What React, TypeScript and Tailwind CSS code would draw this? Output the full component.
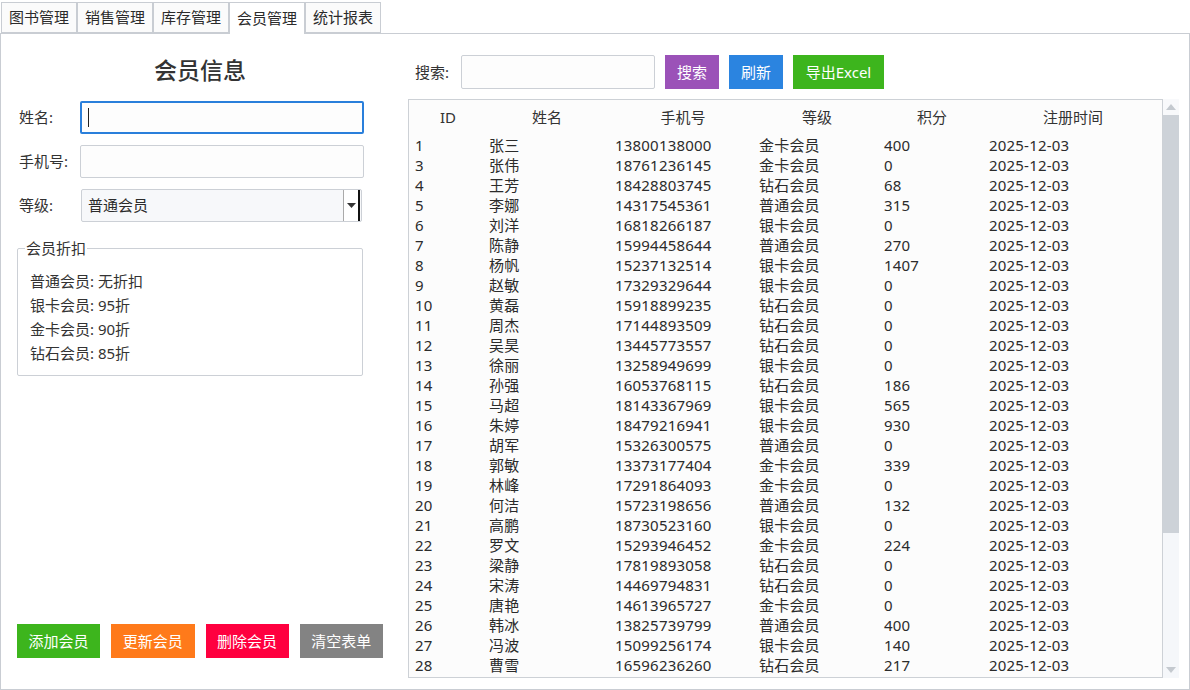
import React from 'react';

const FONT = { fontFamily: '"Noto Sans", "Noto Sans CJK SC", sans-serif' };

const tabs = ['图书管理', '销售管理', '库存管理', '会员管理', '统计报表'];

const members: [string, string, string, string, string][] = [
  ['1', '张三', '13800138000', '金卡会员', '400'],
  ['3', '张伟', '18761236145', '金卡会员', '0'],
  ['4', '王芳', '18428803745', '钻石会员', '68'],
  ['5', '李娜', '14317545361', '普通会员', '315'],
  ['6', '刘洋', '16818266187', '银卡会员', '0'],
  ['7', '陈静', '15994458644', '普通会员', '270'],
  ['8', '杨帆', '15237132514', '银卡会员', '1407'],
  ['9', '赵敏', '17329329644', '银卡会员', '0'],
  ['10', '黄磊', '15918899235', '钻石会员', '0'],
  ['11', '周杰', '17144893509', '钻石会员', '0'],
  ['12', '吴昊', '13445773557', '钻石会员', '0'],
  ['13', '徐丽', '13258949699', '银卡会员', '0'],
  ['14', '孙强', '16053768115', '钻石会员', '186'],
  ['15', '马超', '18143367969', '银卡会员', '565'],
  ['16', '朱婷', '18479216941', '银卡会员', '930'],
  ['17', '胡军', '15326300575', '普通会员', '0'],
  ['18', '郭敏', '13373177404', '金卡会员', '339'],
  ['19', '林峰', '17291864093', '金卡会员', '0'],
  ['20', '何洁', '15723198656', '普通会员', '132'],
  ['21', '高鹏', '18730523160', '银卡会员', '0'],
  ['22', '罗文', '15293946452', '金卡会员', '224'],
  ['23', '梁静', '17819893058', '钻石会员', '0'],
  ['24', '宋涛', '14469794831', '钻石会员', '0'],
  ['25', '唐艳', '14613965727', '金卡会员', '0'],
  ['26', '韩冰', '13825739799', '普通会员', '400'],
  ['27', '冯波', '15099256174', '银卡会员', '140'],
  ['28', '曹雪', '16596236260', '钻石会员', '217'],
];

const discounts = ['普通会员: 无折扣', '银卡会员: 95折', '金卡会员: 90折', '钻石会员: 85折'];

function Tabs() {
  return (
    <div className="flex pt-[2px] pl-px h-[34px] relative z-10">
      {tabs.map((t) => {
        const active = t === '会员管理';
        return (
          <div
            key={t}
            className={
              active
                ? 'w-[76px] h-[32px] bg-white border border-b-0 border-[#c9cdd3] flex items-center justify-center'
                : 'w-[76px] h-[31px] bg-[#fbfbfb] border border-[#c9cdd3] flex items-center justify-center'
            }
          >
            <span className="text-[15px] leading-none text-[#2b2b2b]">{t}</span>
          </div>
        );
      })}
    </div>
  );
}

function LeftPanel() {
  return (
    <div className="w-[382px] pl-[16px] flex flex-col h-full">
      <div className="mt-[21px] h-[30px] flex items-center justify-center text-[23px] font-medium text-[#333]">
        会员信息
      </div>

      <div className="mt-[16px] flex items-center h-[33px]">
        <span className="w-[63px] pl-[2px] text-[15px] text-[#333]">姓名:</span>
        <div className="w-[284px] h-[33px] border-2 border-[#2a7fdb] rounded-[2px] bg-[#fdfdfd] flex items-center pl-[6px]">
          <div className="w-px h-[19px] bg-[#222]" />
        </div>
      </div>

      <div className="mt-[11px] flex items-center h-[33px]">
        <span className="w-[63px] pl-[2px] text-[15px] text-[#333]">手机号:</span>
        <div className="w-[284px] h-[33px] border border-[#ccd0d6] rounded-[2px] bg-[#fdfdfd]" />
      </div>

      <div className="mt-[11px] flex items-center h-[33px]">
        <span className="w-[64px] pl-[2px] text-[15px] text-[#333]">等级:</span>
        <div className="w-[281px] h-[33px] border border-[#ccd0d6] rounded-[2px] bg-[#f7f8fa] flex items-center">
          <span className="flex-1 pl-[6px] text-[15px] text-[#2b2b2b]">普通会员</span>
          <div className="w-[17px] h-[31px] bg-white border-l border-[#aaa] border-r-2 border-r-[#111] flex items-center justify-center mr-[1px]">
            <svg width="9" height="6" viewBox="0 0 9 6">
              <path d="M0 0 L9 0 L4.5 5 Z" fill="#333" />
            </svg>
          </div>
        </div>
      </div>

      <div className="mt-[26px] w-[346px] h-[128px] border border-[#ccd0d6] rounded-[2px] relative">
        <span className="absolute -top-[11px] left-[7px] bg-white px-px text-[15px] leading-[20px] text-[#333]">
          会员折扣
        </span>
        <div className="pt-[20px] pl-[12px] flex flex-col">
          {discounts.map((d) => (
            <span key={d} className="h-[24px] leading-[24px] text-[15px] text-[#333]">
              {d}
            </span>
          ))}
        </div>
      </div>

      <div className="mt-auto mb-[31px] flex gap-[11px]">
        <button className="w-[84px] h-[34px] bg-[#3db51d] text-white text-[15px]">添加会员</button>
        <button className="w-[84px] h-[34px] bg-[#ff7a1a] text-white text-[15px]">更新会员</button>
        <button className="w-[84px] h-[34px] bg-[#ff003f] text-white text-[15px]">删除会员</button>
        <button className="w-[84px] h-[34px] bg-[#838383] text-white text-[15px]">清空表单</button>
      </div>
    </div>
  );
}

const cols = [
  { head: 'ID', w: 'w-[78px]', pad: 'pl-[6px]' },
  { head: '姓名', w: 'w-[120px]', pad: 'pl-[2px]' },
  { head: '手机号', w: 'w-[152px]', pad: 'pl-[8px]' },
  { head: '等级', w: 'w-[116px]', pad: 'pl-0' },
  { head: '积分', w: 'w-[114px]', pad: 'pl-[9px]' },
  { head: '注册时间', w: 'w-[168px]', pad: 'pl-0' },
];

function RightPanel() {
  return (
    <div className="flex-1 pl-[25px] flex flex-col">
      <div className="mt-[21px] h-[34px] flex items-center">
        <span className="w-[53px] pl-[7px] text-[15px] text-[#333]">搜索:</span>
        <div className="w-[194px] h-[34px] border border-[#ccd0d6] rounded-[2px] bg-[#fdfdfd]" />
        <button className="ml-[10px] w-[54px] h-[34px] bg-[#9b52b8] text-white text-[15px]">搜索</button>
        <button className="ml-[10px] w-[54px] h-[34px] bg-[#2b84e0] text-white text-[15px]">刷新</button>
        <button className="ml-[10px] w-[91px] h-[34px] bg-[#3db51d] text-white text-[15px]">导出Excel</button>
      </div>

      <div className="mt-[10px] flex h-[579px]">
        <div className="w-[755px] h-full border border-[#cdd1d6] bg-[#fcfcfc] overflow-hidden">
          <div className="flex h-[35px] items-center">
            {cols.map((c) => (
              <div key={c.head} className={`${c.w} text-center text-[15px] text-[#333]`}>
                {c.head}
              </div>
            ))}
          </div>
          {members.map((m) => (
            <div key={m[0]} className="flex h-[20px] items-center">
              {[...m, '2025-12-03'].map((v, i) => (
                <div
                  key={i}
                  className={`${cols[i].w} ${cols[i].pad} text-[15px] leading-[20px] tracking-[0.2px] text-[#2b2b2b] whitespace-nowrap`}
                >
                  {v}
                </div>
              ))}
            </div>
          ))}
        </div>
        <div className="w-[16px] h-full bg-[#f5f7fa] flex flex-col">
          <div className="h-[16px] flex items-center justify-center bg-[#f8f9fb]">
            <svg width="10" height="6" viewBox="0 0 10 6">
              <path d="M0 6 L10 6 L5 0 Z" fill="#c4c9cf" />
            </svg>
          </div>
          <div className="h-[418px] bg-[#cdd2d8]" />
          <div className="flex-1" />
          <div className="h-[16px] flex items-center justify-center">
            <svg width="10" height="6" viewBox="0 0 10 6">
              <path d="M0 0 L10 0 L5 6 Z" fill="#c4c9cf" />
            </svg>
          </div>
        </div>
      </div>
    </div>
  );
}

export default function App() {
  return (
    <div className="w-[1190px] h-[690px] bg-white overflow-hidden" style={FONT}>
      <Tabs />
      <div className="-mt-px h-[657px] border border-[#c9cdd3] flex">
        <LeftPanel />
        <RightPanel />
      </div>
    </div>
  );
}
